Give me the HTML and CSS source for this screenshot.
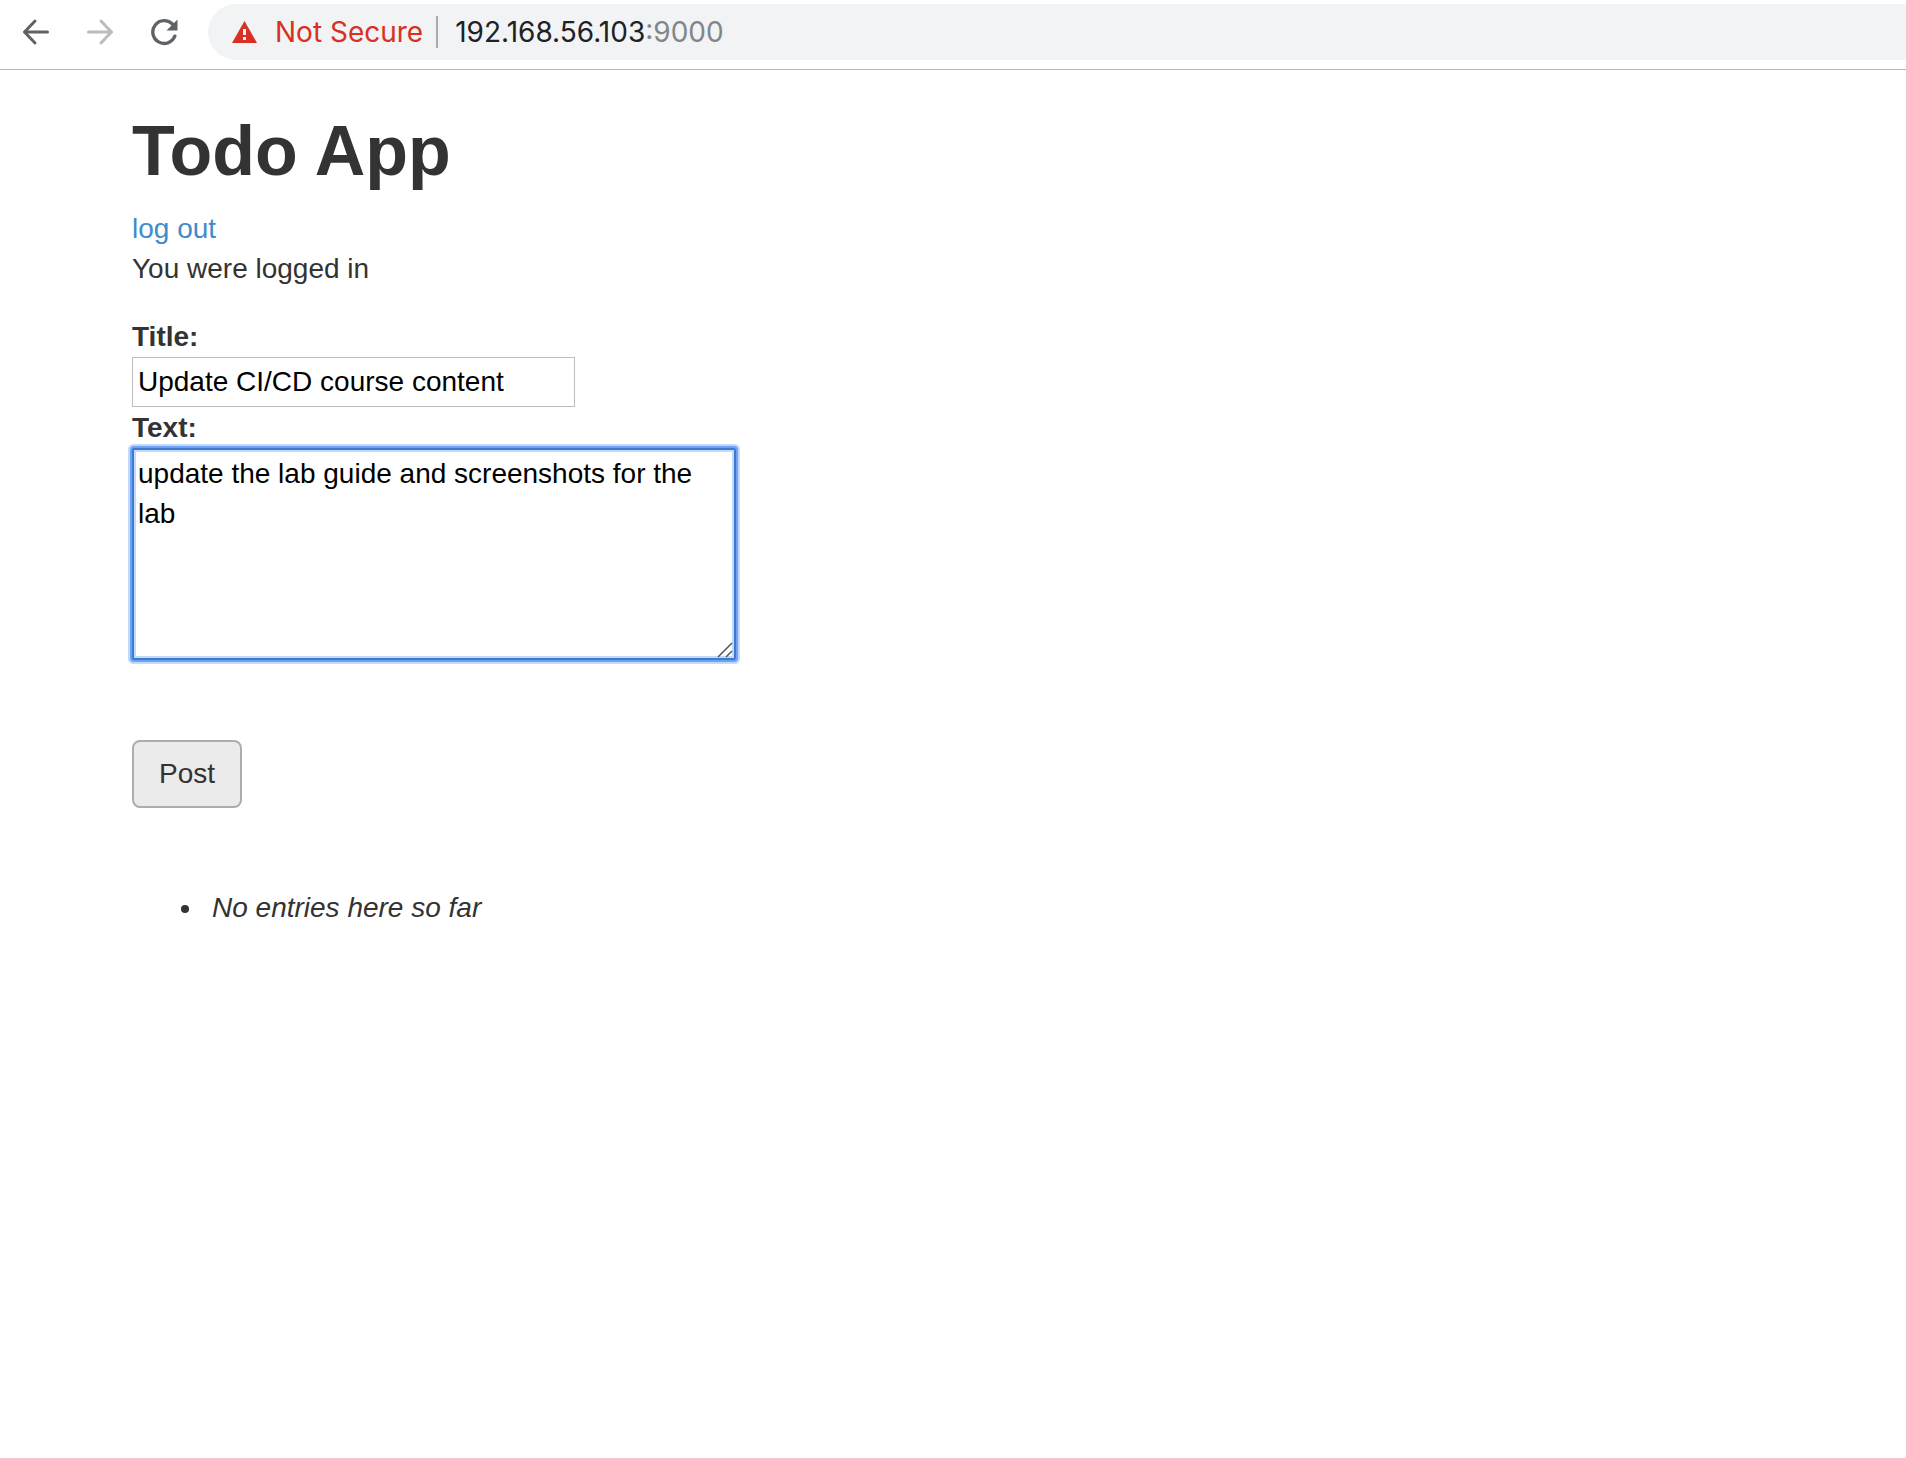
FILE: index.html
```html
<!DOCTYPE html>
<html lang="en">
<head>
<meta charset="utf-8">
<title>Todo App</title>
<link rel="stylesheet" href="styles.css">
</head>
<body>
<header class="toolbar">
  <nav class="nav-buttons" aria-label="Browser">
    <button type="button" class="nav-button" aria-label="Back">
      <svg width="28" height="28" viewBox="0 0 28 28" fill="none" stroke="#5f6368" stroke-width="3" stroke-linecap="round" stroke-linejoin="round"><path d="M25.500 14H2.500M13 3 2.500 14 13 25"/></svg>
    </button>
    <button type="button" class="nav-button" aria-label="Forward" disabled>
      <svg width="28" height="28" viewBox="0 0 28 28" fill="none" stroke="#babcbe" stroke-width="3" stroke-linecap="round" stroke-linejoin="round"><path d="M2.500 14H25.500M15 3 25.500 14 15 25"/></svg>
    </button>
    <button type="button" class="nav-button" aria-label="Reload">
      <svg width="28" height="28" viewBox="0 0 28 28"><path d="M22.500 6.200A11.400 11.400 0 1 0 24.800 18.200" fill="none" stroke="#5f6368" stroke-width="3.400" stroke-linecap="round"/><path d="M27.500 1.500V12.500H16.500Z" fill="#5f6368"/></svg>
    </button>
  </nav>
  <div class="address">
    <svg class="warning" width="25" height="22" viewBox="0 0 25 22"><path d="M12.500 0 25 22H0Z" fill="#d93025"/><path d="M11 8h3v6h-3zM11 16h3v3h-3z" fill="#f1f3f4"/></svg>
    <span class="insecure">Not Secure</span>
    <span class="divider"></span>
    <span class="url">192.168.56.103<span class="port">:9000</span></span>
  </div>
</header>
<main class="container">
  <h1 class="heading">Todo App</h1>
  <a class="link" href="#">log out</a>
  <div class="flash">You were logged in</div>
  <form class="entry-form">
    <label class="label" for="title">Title:</label>
    <input class="field title-field" id="title" type="text" value="Update CI/CD course content">
    <label class="label" for="text">Text:</label>
    <div class="text-wrap">
      <textarea class="field text-field" id="text" rows="5">update the lab guide and screenshots for the lab</textarea>
      <svg class="grip" width="16" height="16" viewBox="0 0 16 16" fill="none" stroke="#555" stroke-width="1.500"><path d="M1 15 15 1M9 15l6-6"/></svg>
    </div>
    <button type="button" class="post">Post</button>
  </form>
  <ul class="entries">
    <li class="entry"><em>No entries here so far</em></li>
  </ul>
</main>
</body>
</html>
```
FILE: styles.css
```css
* { box-sizing: border-box; }

body {
  margin: 0;
  background: #fff;
  color: #333;
  font: 28px/40px "Liberation Sans", Arial, sans-serif;
}

.toolbar {
  display: flex;
  align-items: center;
  height: 70px;
  padding: 4px 0 9px 22px;
  border-bottom: 1px solid #b4b5b6;
}

.nav-buttons { display: flex; gap: 36px; margin-right: 30px; }

.nav-button {
  display: flex;
  padding: 0;
  border: 0;
  background: none;
}

.address {
  flex: 1;
  display: flex;
  align-items: center;
  height: 56px;
  padding-left: 24px;
  border-radius: 28px 0 0 28px;
  background: #f1f3f4;
  font-family: Inter, sans-serif;
}

.warning { margin-right: 18px; }
.insecure { color: #d93025; }

.divider {
  width: 2px;
  height: 32px;
  margin: 0 17px 0 13px;
  background: #a8abae;
}

.url { color: #202124; }
.port { color: #80868b; }

.container { padding: 41px 132px; }

.heading {
  margin: 0 0 18px;
  font-size: 70px;
  line-height: 80px;
  font-weight: 700;
}

.link {
  display: table;
  color: #428bca;
  text-decoration: none;
}

.entry-form {
  display: flex;
  flex-direction: column;
  align-items: flex-start;
  margin-top: 28px;
}

.label { font-weight: 700; }

.field {
  display: block;
  margin: 0;
  border-radius: 0;
  color: #000;
  background: #fff;
  font: inherit;
}

.title-field {
  width: 443px;
  height: 50px;
  margin-bottom: 1px;
  padding: 0 5px;
  border: 1px solid #bebebe;
}

.text-wrap {
  position: relative;
  width: 604px;
  max-width: 100%;
}

.text-field {
  width: 100%;
  height: 212px;
  padding: 4px;
  border: 2px solid #3f79d0;
  border-radius: 2px;
  outline: 0;
  resize: none;
  box-shadow: 0 0 0 2px #6ea3f4, 0 0 0 4px #c2dafb, inset 0 0 0 2px #c2dafb;
}

.grip {
  position: absolute;
  right: 3px;
  bottom: 2px;
  pointer-events: none;
}

.post {
  height: 68px;
  margin-top: 80px;
  padding: 0 25px;
  border: 2px solid #adadad;
  border-radius: 8px;
  background: #ebebeb;
  color: #333;
  font: inherit;
}

.entries { margin: 80px 0 0; padding-left: 72px; }
.entry { padding-left: 8px; }
```
